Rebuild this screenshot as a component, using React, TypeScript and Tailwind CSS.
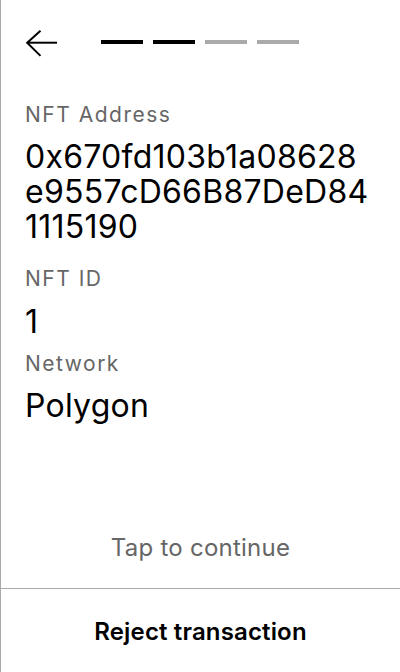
const FIELDS = [
  { label: 'NFT Address', value: '0x670fd103b1a08628e9557cD66B87DeD841115190' },
  { label: 'NFT ID', value: '1' },
  { label: 'Network', value: 'Polygon' },
]
const STEPS = 4
const CURRENT = 2

export default function App() {
  return (
    <div className="w-[400px] h-[672px] bg-white border-l border-[#aaaaaa] flex flex-col font-['Inter',sans-serif]">
      {/* Header */}
      <div className="flex items-start px-6 pt-[30px]">
        <button className="w-8 h-[27px] text-black cursor-pointer">
          <svg viewBox="0 0 32 27" width="32" height="27" fill="none" stroke="currentColor" strokeWidth="2">
            <path d="M32 12.7H2" />
            <path d="M15.5 0.7L2.2 12.7L15.5 25.9" />
          </svg>
        </button>
        <div className="flex gap-[10px] ml-[44px] mt-[10px]">
          {Array.from({ length: STEPS }).map((_, i) => (
            <div key={i} className={`w-[42px] h-1 ${i < CURRENT ? 'bg-black' : 'bg-[#aaaaaa]'}`} />
          ))}
        </div>
      </div>

      {/* Details */}
      <div className="pl-6 pr-[30px] mt-[46px]">
        <p className="text-[21px] leading-6 tracking-[1.5px] text-[#666666]">{FIELDS[0].label}</p>
        <p className="mt-3 text-[32px] leading-[35px] tracking-[0.25px] text-black break-all">{FIELDS[0].value}</p>
        <p className="mt-[23px] text-[21px] leading-6 tracking-[1.5px] text-[#666666]">{FIELDS[1].label}</p>
        <p className="mt-[13px] text-[32px] leading-[35px] tracking-[0.25px] text-black">{FIELDS[1].value}</p>
        <p className="mt-[13px] text-[21px] leading-6 tracking-[1.5px] text-[#666666]">{FIELDS[2].label}</p>
        <p className="mt-3 text-[32px] leading-[35px] tracking-[0.25px] text-black">{FIELDS[2].value}</p>
      </div>

      <div className="flex-1" />

      <p className="text-center text-[24px] leading-7 tracking-[0.25px] text-[#666666] mb-[26px]">Tap to continue</p>
      <div className="border-t border-[#aaaaaa]">
        <button className="w-full h-[83px] pt-[3px] flex items-center justify-center text-[24px] leading-7 tracking-[0.15px] font-semibold text-black cursor-pointer">
          Reject transaction
        </button>
      </div>
    </div>
  )
}
